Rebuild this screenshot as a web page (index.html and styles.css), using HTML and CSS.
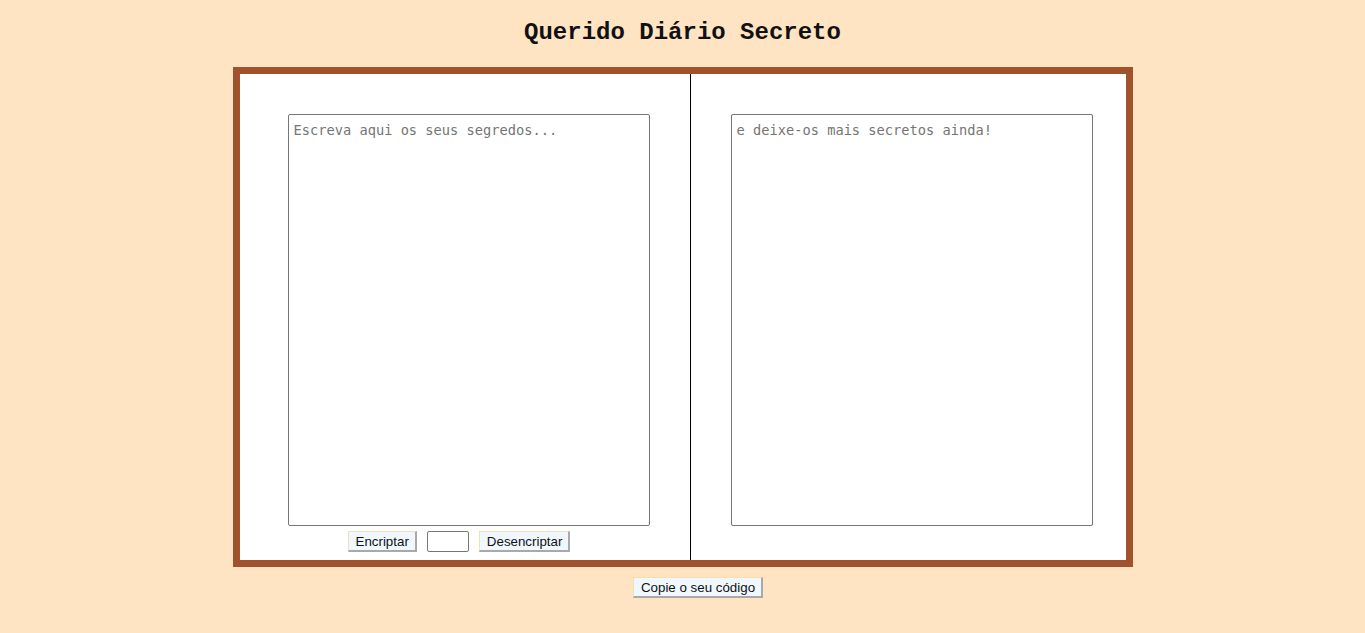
FILE: index.html
```html
<!DOCTYPE html>
<html lang="pt">
<head>
<meta charset="utf-8">
<title>Querido Diário Secreto</title>
<link rel="stylesheet" href="styles.css">
</head>
<body>
<h1 class="title">Querido Diário Secreto</h1>
<main class="book">
  <section class="page page-left">
    <textarea class="sheet" placeholder="Escreva aqui os seus segredos..."></textarea>
    <div class="controls">
      <button class="btn">Encriptar</button>
      <input class="key" type="text">
      <button class="btn">Desencriptar</button>
    </div>
  </section>
  <section class="page page-right">
    <textarea class="sheet" placeholder="e deixe-os mais secretos ainda!"></textarea>
  </section>
</main>
<div class="copy-row">
  <button class="btn">Copie o seu código</button>
</div>
</body>
</html>
```

FILE: styles.css
```css
html, body {
  margin: 0;
  padding: 0;
  background: #ffe4c4;
}

.title {
  margin: 0;
  padding: 19px 0 0 0;
  height: 48px;
  box-sizing: border-box;
  text-align: center;
  font-family: "Liberation Mono", "Courier New", monospace;
  font-weight: bold;
  font-size: 24px;
  line-height: 28px;
  color: #111;
}

.book {
  width: 900px;
  height: 500px;
  margin: 19px auto 0 auto;
  box-sizing: border-box;
  border: 7px solid #a0522d;
  background: #fff;
  display: flex;
}

.page {
  display: flex;
  flex-direction: column;
  padding-top: 40px;
  box-sizing: border-box;
}

.page-left {
  width: 451px;
  border-right: 1px solid #000;
  padding-left: 48px;
}

.page-right {
  flex: 1;
  padding-left: 40px;
}

.sheet {
  width: 362px;
  height: 412px;
  box-sizing: border-box;
  margin: 0;
  border: 1px solid #767676;
  border-radius: 2px;
  padding: 7px 5px 4px 5px;
  font-family: "DejaVu Sans Mono", "Liberation Mono", monospace;
  font-size: 13.7px;
  line-height: 16px;
  resize: none;
  background: #fff;
}

.sheet::placeholder {
  color: #757575;
}

.controls {
  display: flex;
  align-items: center;
  gap: 10px;
  margin-top: 5px;
  padding-left: 60px;
}

.btn {
  height: 21px;
  box-sizing: border-box;
  margin: 0;
  padding: 0 6px 0 7px;
  background: #f0f8ff;
  border-style: solid;
  border-width: 1px 2px 2px 1px;
  border-color: #f5deb3 #a9a9a9 #a9a9a9 #f5deb3;
  font-family: "Liberation Sans", Arial, sans-serif;
  font-size: 13.33px;
  color: #111;
  line-height: 17px;
}

.key {
  width: 42px;
  height: 21px;
  box-sizing: border-box;
  margin: 0;
  padding: 1px 2px;
  border: 1px solid #767676;
  border-radius: 2px;
  background: #fff;
}

.copy-row {
  display: flex;
  justify-content: center;
  padding-left: 31px;
  margin-top: 10px;
}
```
